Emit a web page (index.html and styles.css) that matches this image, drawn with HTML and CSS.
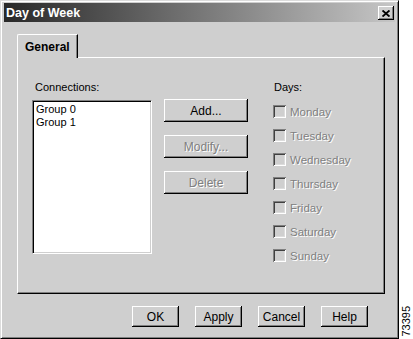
FILE: index.html
```html
<!DOCTYPE html>
<html lang="en">
<head>
    <meta charset="UTF-8">
    <title>Day of Week</title>
    <link rel="stylesheet" href="styles.css">
</head>
<body>
    <div class="window">
        <div class="titlebar">
            <span class="title">Day of Week</span>
            <button class="close" aria-label="Close">
                <svg width="8" height="7" viewBox="0 0 8 7"><path d="M0.5 0.5 L7.5 6.5 M7.5 0.5 L0.5 6.5" stroke="#000" stroke-width="1.9" fill="none"/></svg>
            </button>
        </div>

        <div class="content">
            <div class="tabs">
                <div class="tab active">General</div>
            </div>
            <div class="panel">
                <div class="col-list">
                    <div class="label">Connections:</div>
                    <div class="listbox">
                        <div class="item">Group 0</div>
                        <div class="item">Group 1</div>
                    </div>
                </div>

                <div class="col-buttons">
                    <button class="btn wide">Add...</button>
                    <button class="btn wide" disabled>Modify...</button>
                    <button class="btn wide" disabled>Delete</button>
                </div>

                <div class="col-days">
                    <div class="label days-label">Days:</div>
                    <label class="day"><input type="checkbox" disabled><span>Monday</span></label>
                    <label class="day"><input type="checkbox" disabled><span>Tuesday</span></label>
                    <label class="day"><input type="checkbox" disabled><span>Wednesday</span></label>
                    <label class="day"><input type="checkbox" disabled><span>Thursday</span></label>
                    <label class="day"><input type="checkbox" disabled><span>Friday</span></label>
                    <label class="day"><input type="checkbox" disabled><span>Saturday</span></label>
                    <label class="day"><input type="checkbox" disabled><span>Sunday</span></label>
                </div>
            </div>

            <div class="actions">
                <button class="btn">OK</button>
                <button class="btn">Apply</button>
                <button class="btn">Cancel</button>
                <button class="btn">Help</button>
            </div>
        </div>
    </div>
    <div class="figure-id">73395</div>
</body>
</html>
```

FILE: styles.css
```css
body {
    margin: 0;
    background: #fff;
    display: flex;
    font-family: "Liberation Sans", Arial, sans-serif;
    font-size: 11px;
    color: #000;
}

/* dialog frame */
.window {
    width: 399px;
    height: 339px;
    box-sizing: border-box;
    background: #cfcfcf;
    border: 1px solid;
    border-color: #dcdcdc #000 #000 #dcdcdc;
    box-shadow: inset 1px 1px #fff, inset -1px -1px #808080;
    padding: 2px 3px 0 3px;
    display: flex;
    flex-direction: column;
}

.titlebar {
    height: 19px;
    background: linear-gradient(to right, #282828, #c6c6c6);
    display: flex;
    align-items: center;
    justify-content: space-between;
    padding: 0 1px 0 2px;
    color: #fff;
    font-weight: bold;
    font-size: 12.5px;
}

.close {
    width: 16px;
    height: 14px;
    padding: 0;
    border: none;
    background: #cfcfcf;
    box-shadow: inset -1px -1px #000, inset 1px 1px #fff, inset -2px -2px #808080;
    display: flex;
    align-items: center;
    justify-content: center;
    margin-top: 1px;
}

.content {
    padding: 12px 10px 0 13px;
}

/* tabs */
.tabs { display: flex; }
.tab {
    width: 61px;
    height: 24px;
    box-sizing: border-box;
    border-top: 1px solid #fff;
    border-left: 1px solid #fff;
    border-right: 1px solid #000;
    border-top-left-radius: 2px;
    box-shadow: inset -1px 0 #808080;
    padding: 5px 0 0 7px;
    font-weight: bold;
    font-size: 12px;
    background: #cfcfcf;
    margin-bottom: -1px;
    position: relative;
    z-index: 1;
}

.panel {
    height: 237px;
    box-sizing: border-box;
    border: 1px solid;
    border-color: #fff #000 #000 #fff;
    box-shadow: inset -1px -1px #808080;
    padding: 23px 0 0 14px;
    display: flex;
}

.label {
    height: 13px;
    line-height: 13px;
}

.col-list { width: 120px; }
.col-list .label { padding-left: 3px; margin-bottom: 6px; }

.listbox {
    height: 154px;
    box-sizing: border-box;
    background: #fff;
    border: 1px solid;
    border-color: #808080 #fff #fff #808080;
    box-shadow: inset 1px 1px #000, inset -1px -1px #cfcfcf;
    padding: 2px 3px;
}
.item { line-height: 13px; }

.col-buttons {
    width: 84px;
    margin-left: 12px;
    padding-top: 18px;
    display: flex;
    flex-direction: column;
    gap: 13px;
}

/* classic push button */
.btn {
    width: 47px;
    height: 21px;
    padding: 0;
    border: none;
    background: #cfcfcf;
    font-family: inherit;
    font-size: 12px;
    color: #000;
    box-shadow: inset -1px -1px #000, inset 1px 1px #fff, inset -2px -2px #808080;
}
.btn.wide { width: 84px; height: 23px; }
.btn:disabled {
    color: #808080;
    text-shadow: 1px 1px #fff;
}

.col-days {
    margin-left: 25px;
    display: flex;
    flex-direction: column;
    gap: 11px;
}
.days-label { padding-left: 1px; }

.day {
    display: flex;
    align-items: center;
    gap: 4px;
    height: 13px;
    color: #808080;
    text-shadow: 1px 1px #fff;
    font-size: 11.5px;
}
.day input {
    appearance: none;
    margin: 0;
    width: 13px;
    height: 13px;
    background: #cfcfcf;
    box-shadow: inset 1px 1px #808080, inset -1px -1px #fff, inset 2px 2px #404040, inset -2px -2px #dcdcdc;
}

.actions {
    margin-top: 12px;
    display: flex;
    justify-content: flex-end;
    gap: 16px;
    padding-right: 17px;
}

.figure-id {
    writing-mode: vertical-rl;
    transform: rotate(180deg);
    align-self: flex-end;
    margin: 0 0 2px 1px;
    font-size: 11px;
    line-height: 12px;
}
```
